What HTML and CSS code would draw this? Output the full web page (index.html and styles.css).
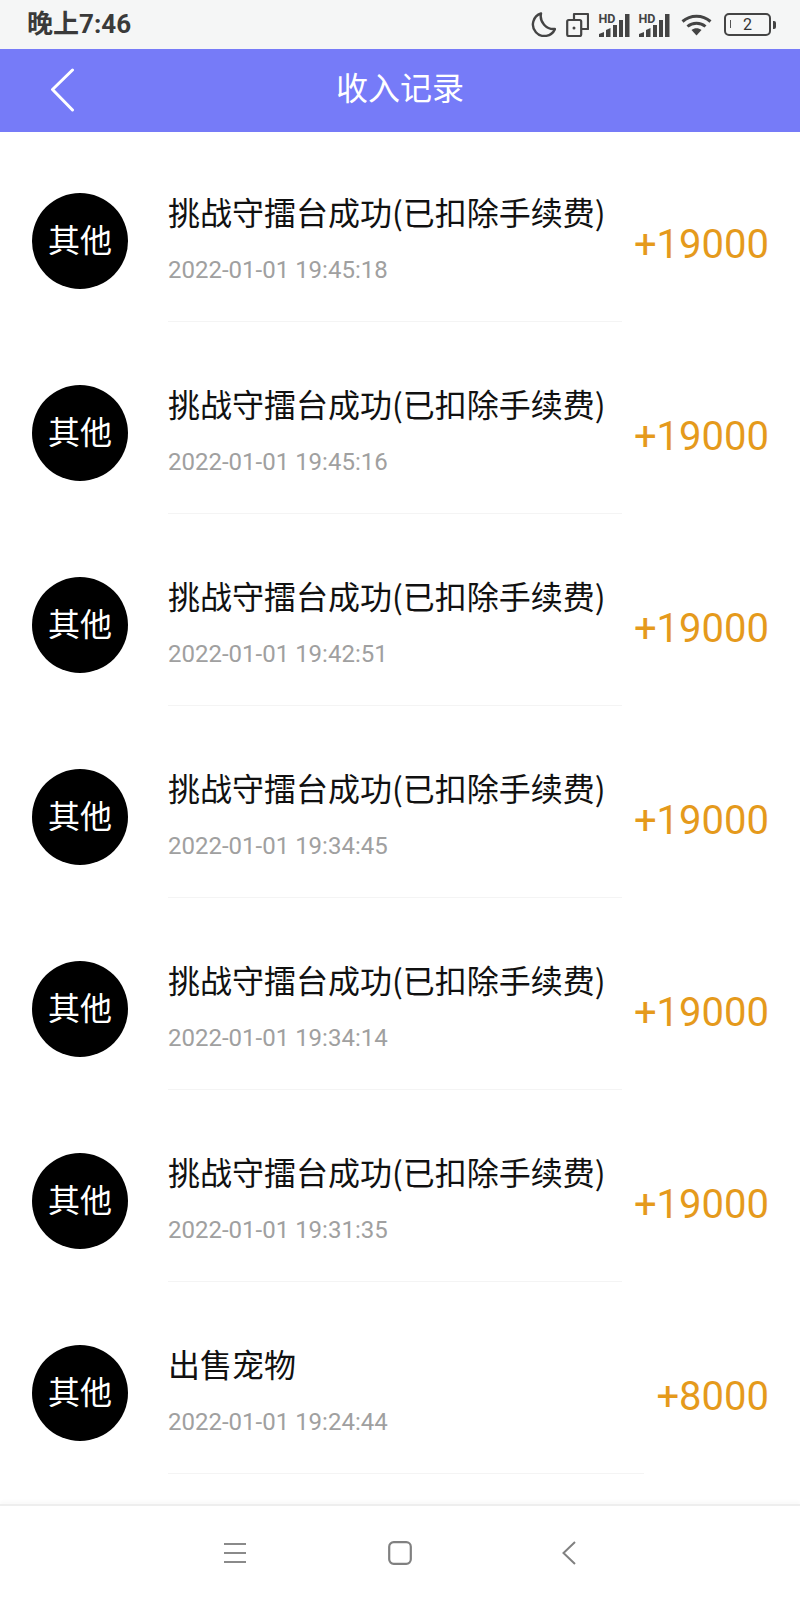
FILE: index.html
```html
<!DOCTYPE html>
<html lang="zh-CN">
<head>
	<meta charset="UTF-8">
	<meta name="viewport" content="width=device-width, initial-scale=1.0">
	<title>收入记录</title>
	<link rel="stylesheet" href="styles.css">
</head>
<body>
	<div class="status-bar">
		<span class="status-time">晚上7:46</span>
		<div class="status-icons">
			<svg class="icon-moon" width="25" height="25" viewBox="0 0 25 25"><path d="M10 1.5 A11.5 11.5 0 1 0 24 17 A13 13 0 0 1 10 1.5 Z" fill="none" stroke="#444" stroke-width="2.4" stroke-linejoin="round"/></svg>
			<svg class="icon-dual" width="23" height="25" viewBox="0 0 23 25"><path d="M8 7 V2 H22 V17 H16" fill="none" stroke="#444" stroke-width="2.2" stroke-linejoin="round"/><rect x="1.2" y="8" width="14" height="16" rx="1.5" fill="none" stroke="#444" stroke-width="2.2"/><circle cx="8" cy="16" r="1.5" fill="#444"/></svg>
			<svg class="icon-signal" width="32" height="26" viewBox="0 -2 32 26"><text x="0.5" y="9.5" class="hd-text">HD</text><path d="M1 24 V21 L6 19 V24 Z M8 24 V17 L12.5 15 V24 Z M15 24 V12 H19 V24 Z M21 24 V7 H25 V24 Z M27 24 V1 H31.5 V24 Z" fill="#444"/></svg>
			<svg class="icon-signal" width="32" height="26" viewBox="0 -2 32 26"><text x="0.5" y="9.5" class="hd-text">HD</text><path d="M1 24 V21 L6 19 V24 Z M8 24 V17 L12.5 15 V24 Z M15 24 V12 H19 V24 Z M21 24 V7 H25 V24 Z M27 24 V1 H31.5 V24 Z" fill="#444"/></svg>
			<svg class="icon-wifi" width="31" height="22" viewBox="0 0 31 22"><path d="M1.5 7.5 C9.5 0.5 21.5 0.5 29.5 7.5 M6.5 12.5 C11.5 8 19.5 8 24.5 12.5" fill="none" stroke="#444" stroke-width="3"/><path d="M10.5 16 C13.5 13.5 17.5 13.5 20.5 16 L15.5 21.5 Z" fill="#444"/></svg>
			<div class="battery">
				<div class="battery-body"><span class="battery-level"></span><span class="battery-num">2</span></div>
				<span class="battery-tip"></span>
			</div>
		</div>
	</div>

	<div class="header">
		<svg class="back-icon" width="25" height="45" viewBox="0 0 25 45"><path d="M22.5 2 L2.5 21.5 L22.5 42" fill="none" stroke="#fff" stroke-width="3" stroke-linecap="round" stroke-linejoin="round"/></svg>
		<span class="header-title">收入记录</span>
	</div>

	<div class="record-list">
		<div class="record">
			<div class="record-avatar">其他</div>
			<div class="record-main">
				<div class="record-title">挑战守擂台成功(已扣除手续费)</div>
				<div class="record-time">2022-01-01 19:45:18</div>
			</div>
			<div class="record-amount">+19000</div>
		</div>
		<div class="record">
			<div class="record-avatar">其他</div>
			<div class="record-main">
				<div class="record-title">挑战守擂台成功(已扣除手续费)</div>
				<div class="record-time">2022-01-01 19:45:16</div>
			</div>
			<div class="record-amount">+19000</div>
		</div>
		<div class="record">
			<div class="record-avatar">其他</div>
			<div class="record-main">
				<div class="record-title">挑战守擂台成功(已扣除手续费)</div>
				<div class="record-time">2022-01-01 19:42:51</div>
			</div>
			<div class="record-amount">+19000</div>
		</div>
		<div class="record">
			<div class="record-avatar">其他</div>
			<div class="record-main">
				<div class="record-title">挑战守擂台成功(已扣除手续费)</div>
				<div class="record-time">2022-01-01 19:34:45</div>
			</div>
			<div class="record-amount">+19000</div>
		</div>
		<div class="record">
			<div class="record-avatar">其他</div>
			<div class="record-main">
				<div class="record-title">挑战守擂台成功(已扣除手续费)</div>
				<div class="record-time">2022-01-01 19:34:14</div>
			</div>
			<div class="record-amount">+19000</div>
		</div>
		<div class="record">
			<div class="record-avatar">其他</div>
			<div class="record-main">
				<div class="record-title">挑战守擂台成功(已扣除手续费)</div>
				<div class="record-time">2022-01-01 19:31:35</div>
			</div>
			<div class="record-amount">+19000</div>
		</div>
		<div class="record">
			<div class="record-avatar">其他</div>
			<div class="record-main">
				<div class="record-title">出售宠物</div>
				<div class="record-time">2022-01-01 19:24:44</div>
			</div>
			<div class="record-amount">+8000</div>
		</div>
	</div>

	<div class="nav-bar">
		<svg width="22" height="22" viewBox="0 0 22 22"><path d="M0 2 H22 M0 11 H22 M0 20 H22" fill="none" stroke="#8a8a8a" stroke-width="2"/></svg>
		<svg width="24" height="24" viewBox="0 0 24 24"><rect x="1.2" y="1.2" width="21.6" height="21.6" rx="4.5" fill="none" stroke="#808080" stroke-width="2.2"/></svg>
		<svg class="nav-back" width="14" height="24" viewBox="0 0 14 24"><path d="M13 1 L1.5 12 L13 23" fill="none" stroke="#808080" stroke-width="2"/></svg>
	</div>
</body>
</html>
```

FILE: styles.css
```css
* {
	box-sizing: border-box;
}
body {
	margin: 0;
	width: 800px;
	height: 1600px;
	display: flex;
	flex-direction: column;
	background-color: #fff;
	font-family: "Noto Sans CJK SC", Roboto, sans-serif;
	overflow: hidden;
}
.status-bar {
	height: 49px;
	flex-shrink: 0;
	padding: 0 24px 0 27px;
	display: flex;
	align-items: center;
	justify-content: space-between;
	background-color: #f5f6f6;
}
.status-time {
	font-family: Roboto, "Noto Sans CJK SC", sans-serif;
	font-size: 26px;
	font-weight: 700;
	line-height: 53px;
	color: #3a3a3a;
}
.status-icons {
	display: flex;
	align-items: center;
}
.icon-moon {
	margin-right: 10px;
}
.icon-dual {
	margin-right: 9px;
}
.icon-signal {
	margin-top: -2px;
	margin-right: 8px;
}
.icon-wifi {
	margin-left: 3px;
	margin-right: 12px;
}
.hd-text {
	font-family: Roboto, sans-serif;
	font-size: 12.5px;
	font-weight: 700;
	fill: #444;
}
.battery {
	display: flex;
	align-items: center;
	gap: 2px;
}
.battery-body {
	width: 47px;
	height: 23px;
	border: 2.5px solid #444;
	border-radius: 5px;
	display: flex;
	align-items: center;
	justify-content: center;
	position: relative;
}
.battery-level {
	position: absolute;
	left: 4px;
	top: 5px;
	width: 1px;
	height: 8px;
	background-color: #555;
}
.battery-num {
	font-family: Roboto, sans-serif;
	font-size: 16px;
	line-height: 18px;
	color: #333;
}
.battery-tip {
	width: 3px;
	height: 8px;
	border-radius: 0 2px 2px 0;
	background-color: #444;
}
.header {
	height: 83px;
	flex-shrink: 0;
	padding-left: 50px;
	display: flex;
	align-items: center;
	position: relative;
	background-color: #767bf8;
}
.header-title {
	position: absolute;
	left: 0;
	right: 0;
	top: -4px;
	text-align: center;
	font-size: 32px;
	line-height: 83px;
	color: #fff;
}
.back-icon {
	margin-top: -1px;
}
.record-list {
	flex: 1;
}
.record {
	padding: 62px 31px 2px 32px;
	display: flex;
	align-items: flex-start;
}
.record-avatar {
	width: 96px;
	height: 96px;
	margin-top: -1px;
	margin-right: 40px;
	flex-shrink: 0;
	border-radius: 50%;
	background-color: #000;
	color: #fff;
	font-size: 32px;
	line-height: 90px;
	text-align: center;
}
.record-main {
	flex: 1;
	min-width: 0;
	height: 133px;
	margin-top: -5px;
	border-bottom: 1px solid #f4f4f4;
}
.record-title {
	font-size: 32px;
	line-height: 44px;
	color: #111;
	white-space: nowrap;
}
.record-time {
	margin-top: 21px;
	font-family: Roboto, sans-serif;
	font-size: 24px;
	line-height: 32px;
	color: #a0a0a0;
}
.record-amount {
	margin-left: 12px;
	margin-top: 27px;
	font-family: Roboto, sans-serif;
	font-size: 40px;
	line-height: 48px;
	color: #e59a1c;
}
.nav-bar {
	height: 96px;
	flex-shrink: 0;
	padding: 0 0 0 224px;
	display: flex;
	align-items: center;
	gap: 142px;
	border-top: 2px solid #eeeeee;
	box-shadow: 0 -3px 3px #fafafa;
	background-color: #fff;
}
.nav-back {
	margin-left: 8px;
}
```
